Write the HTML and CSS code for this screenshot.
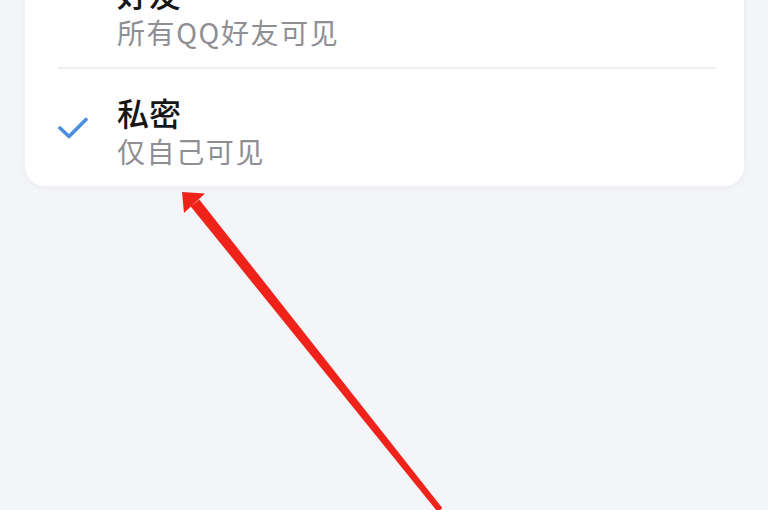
FILE: index.html
```html
<!DOCTYPE html>
<html lang="zh-CN">
<head>
<meta charset="utf-8">
<title>可见范围</title>
<link rel="stylesheet" href="styles.css">
</head>
<body>
<div class="page">
  <div class="card">
    <div class="item">
      <div class="check"></div>
      <div class="text">
        <div class="title">好友</div>
        <div class="sub">所有QQ好友可见</div>
      </div>
    </div>
    <div class="item">
      <div class="check">
        <svg width="30" height="22" viewBox="0 0 30 22"><path d="M2 11 L11 19.5 L28 2.5" fill="none" stroke="#4a8fe0" stroke-width="3.6" stroke-linecap="round" stroke-linejoin="round"/></svg>
      </div>
      <div class="text">
        <div class="title">私密</div>
        <div class="sub">仅自己可见</div>
      </div>
    </div>
  </div>
</div>
<svg class="arrow" width="768" height="510" viewBox="0 0 768 510">
  <polygon points="199.3,199.6 442.3,508.1 437.7,511.9 190.7,206.4" fill="#f0231b"/>
  <polygon points="182,192 205,193.5 184,213" fill="#f0231b"/>
</svg>
</body>
</html>
```
FILE: styles.css
```css
html, body {
  margin: 0;
  padding: 0;
  background: #f4f5f9;
  height: 100%;
  overflow: hidden;
}
body {
  font-family: "Noto Sans CJK SC", "Noto Sans", sans-serif;
}
.page {
  padding: 0 24px 0 25px;
}
.card {
  margin-top: -50px;
  background: #ffffff;
  border-radius: 20px;
  padding: 0 28px 0 33px;
  box-shadow: 0 1px 6px rgba(200, 205, 215, 0.25);
}
.item {
  display: flex;
  align-items: center;
  padding: 23px 0 18px;
}
.item + .item {
  border-top: 2px solid #eeeff2;
}
.check {
  width: 59px;
  flex: none;
  display: flex;
  align-items: center;
}
.check svg {
  display: block;
  margin-top: -4px;
}
.title {
  font-size: 32px;
  line-height: 40px;
  font-weight: 500;
  color: #161616;
}
.sub {
  margin-top: 2px;
  font-size: 28px;
  line-height: 34px;
  color: #8e8e93;
  letter-spacing: 1.6px;
}
.arrow {
  position: absolute;
  left: 0;
  top: 0;
}
```
